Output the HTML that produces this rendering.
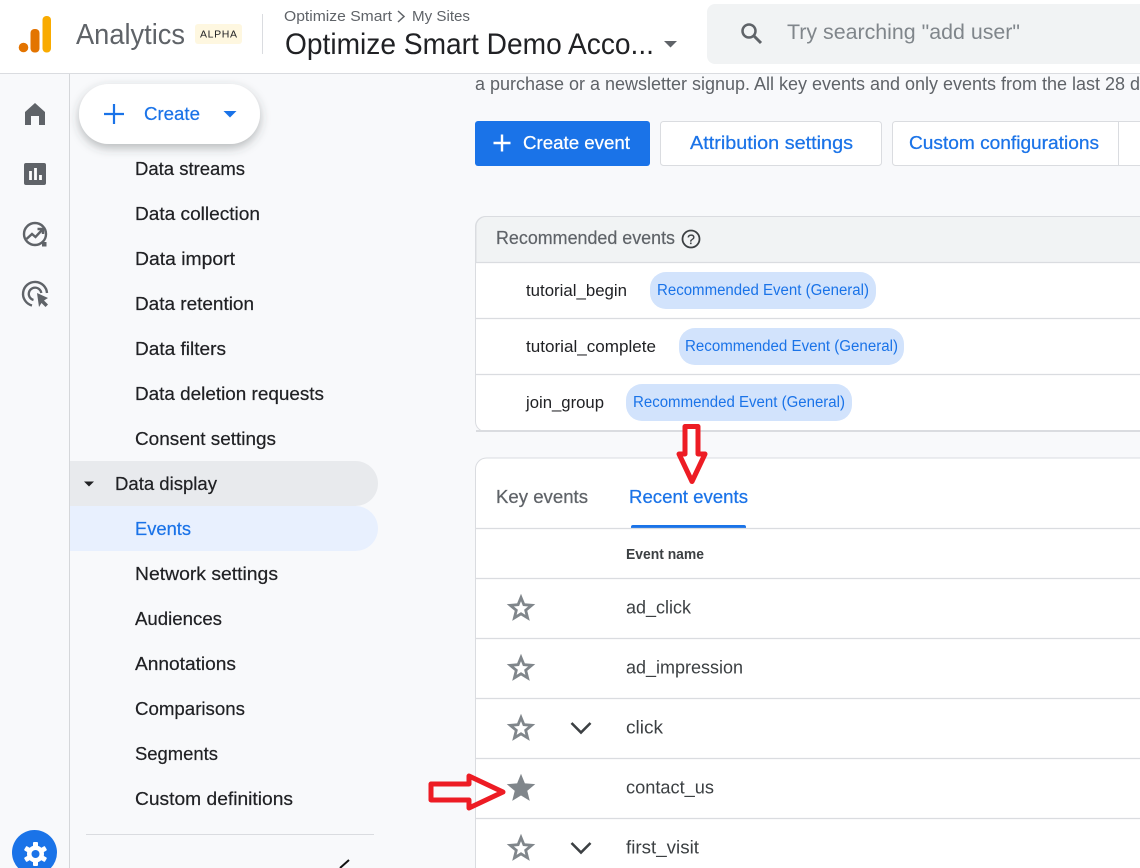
<!DOCTYPE html>
<html lang="en"><head><meta charset="utf-8"><title>Events - Analytics</title>
<style>
html,body{margin:0;padding:0;width:1140px;height:868px;overflow:hidden;background:#f8f9fb}
svg{display:block}
text{font-family:"Liberation Sans",sans-serif;font-size:18px;fill:#202124}
.nav{font-size:18px;fill:#202124;stroke:#202124;stroke-width:.2}
.ev{font-size:18px;fill:#3c4043}
.blue{fill:#1a73e8;stroke:#1a73e8;stroke-width:.25}
.chip{font-size:15.5px;fill:#1a73e8}
.rec{font-size:17px;fill:#202124}
.star{fill:none;stroke:#80868b;stroke-width:2.8;stroke-linejoin:miter}
.chev{fill:none;stroke:#3c4043;stroke-width:2.6}
.line{stroke:#dadce0;stroke-width:1.3}
.arrow{fill:none;stroke:#ed1c24;stroke-width:5;stroke-linejoin:round}
</style></head><body>
<svg width="1140" height="868" viewBox="0 0 1140 868" xmlns="http://www.w3.org/2000/svg">
<defs>
<filter id="sh" x="-20%" y="-40%" width="140%" height="190%"><feDropShadow dx="0" dy="4" stdDeviation="5" flood-color="#3c4043" flood-opacity=".35"/></filter>
</defs>
<rect width="1140" height="868" fill="#f8f9fb"/>

<!-- main cards -->
<text x="475" y="90" textLength="665" lengthAdjust="spacingAndGlyphs" style="font-size:18.5px;fill:#5f6368">a purchase or a newsletter signup. All key events and only events from the last 28 d</text>

<rect x="475" y="121" width="175" height="45" rx="3" fill="#1a73e8"/>
<path d="M502 134.500v17M493.500 143h17" stroke="#fff" stroke-width="2.400"/>
<text x="523" y="149" textLength="107" lengthAdjust="spacingAndGlyphs" style="font-size:18.500px;fill:#fff;stroke:#fff;stroke-width:.25">Create event</text>

<rect x="660.500" y="121.500" width="221" height="44" rx="3" fill="#fff" stroke="#dadce0"/>
<text x="690" y="149" textLength="163" lengthAdjust="spacingAndGlyphs" class="blue" style="font-size:18.500px">Attribution settings</text>
<rect x="892.500" y="121.500" width="270" height="44" rx="3" fill="#fff" stroke="#dadce0"/>
<line x1="1118.500" y1="122" x2="1118.500" y2="165" stroke="#dadce0"/>
<text x="909" y="149" textLength="190" lengthAdjust="spacingAndGlyphs" class="blue" style="font-size:18.500px">Custom configurations</text>

<!-- Recommended card -->
<rect x="475.500" y="216.500" width="700" height="215" rx="10" fill="#fff" stroke="#dadce0"/>
<path d="M476 262V226.500a10 10 0 0 1 10-10H1140V262Z" fill="#f1f3f4"/>
<path d="M476 262V226.500a10 10 0 0 1 10-10H1140" fill="none" stroke="#dadce0"/>
<text x="496" y="244" textLength="179" lengthAdjust="spacingAndGlyphs" style="font-size:18.500px;fill:#5f6368;stroke:#5f6368;stroke-width:.2">Recommended events</text>
<circle cx="691" cy="239" r="8.500" fill="none" stroke="#3c4043" stroke-width="1.800"/>
<text x="691" y="244" text-anchor="middle" style="font-size:14px;fill:#3c4043;stroke:#3c4043;stroke-width:.3">?</text>
<line class="line" x1="476" y1="262.500" x2="1140" y2="262.500"/>
<line class="line" x1="476" y1="318.500" x2="1140" y2="318.500"/>
<line class="line" x1="476" y1="374.500" x2="1140" y2="374.500"/>
<line x1="476" y1="431" x2="1140" y2="431" stroke="#dadce0" stroke-width="2"/>

<text class="rec" x="526" y="296" textLength="101" lengthAdjust="spacingAndGlyphs">tutorial_begin</text>
<rect x="650" y="272" width="226" height="37" rx="16" fill="#d2e3fc"/>
<text class="chip" x="657" y="295" textLength="212" lengthAdjust="spacingAndGlyphs">Recommended Event (General)</text>
<text class="rec" x="526" y="352" textLength="130" lengthAdjust="spacingAndGlyphs">tutorial_complete</text>
<rect x="679" y="328" width="225" height="37" rx="16" fill="#d2e3fc"/>
<text class="chip" x="685" y="351" textLength="213" lengthAdjust="spacingAndGlyphs">Recommended Event (General)</text>
<text class="rec" x="526" y="408" textLength="78" lengthAdjust="spacingAndGlyphs">join_group</text>
<rect x="626" y="384" width="226" height="37" rx="16" fill="#d2e3fc"/>
<text class="chip" x="633" y="407" textLength="212" lengthAdjust="spacingAndGlyphs">Recommended Event (General)</text>

<!-- Events card -->
<path d="M475.500 880V469a11 11 0 0 1 11-11H1170V880Z" fill="#fff" stroke="#dadce0"/>
<text x="496" y="503" textLength="92" lengthAdjust="spacingAndGlyphs" style="font-size:18.500px;fill:#5f6368;stroke:#5f6368;stroke-width:.25">Key events</text>
<text x="629" y="503" textLength="119" lengthAdjust="spacingAndGlyphs" class="blue" style="font-size:18.500px">Recent events</text>
<path d="M631 528v-1a2 2 0 0 1 2-2H744a2 2 0 0 1 2 2v1Z" fill="#1a73e8"/>
<line class="line" x1="476" y1="528.500" x2="1140" y2="528.500"/>
<text x="626" y="559" textLength="78" lengthAdjust="spacingAndGlyphs" style="font-size:14.500px;font-weight:bold;fill:#3c4043">Event name</text>
<line class="line" x1="476" y1="578.500" x2="1140" y2="578.500"/>
<line class="line" x1="476" y1="638.500" x2="1140" y2="638.500"/>
<line class="line" x1="476" y1="698.500" x2="1140" y2="698.500"/>
<line class="line" x1="476" y1="758.500" x2="1140" y2="758.500"/>
<line class="line" x1="476" y1="818.500" x2="1140" y2="818.500"/>

<text class="ev" x="626" y="613.500" textLength="65" lengthAdjust="spacingAndGlyphs">ad_click</text>
<text class="ev" x="626" y="673.500" textLength="117" lengthAdjust="spacingAndGlyphs">ad_impression</text>
<text class="ev" x="626" y="733.500" textLength="37" lengthAdjust="spacingAndGlyphs">click</text>
<text class="ev" x="626" y="793.500" textLength="88" lengthAdjust="spacingAndGlyphs">contact_us</text>
<text class="ev" x="626" y="853.500" textLength="73" lengthAdjust="spacingAndGlyphs">first_visit</text>

<path class="star" d="M521 597.500l2.900 7.200 7.800.6-6 5 1.900 7.600-6.600-4.100-6.600 4.100 1.900-7.600-6-5 7.800-.6Z"/>
<path class="star" d="M521 657.500l2.900 7.200 7.800.6-6 5 1.900 7.600-6.600-4.100-6.600 4.100 1.900-7.600-6-5 7.800-.6Z"/>
<path class="star" d="M521 717.500l2.900 7.200 7.800.6-6 5 1.900 7.600-6.600-4.100-6.600 4.100 1.900-7.600-6-5 7.800-.6Z"/>
<path class="star" style="fill:#80868b" d="M521 777.500l2.900 7.200 7.800.6-6 5 1.900 7.600-6.600-4.100-6.600 4.100 1.900-7.600-6-5 7.800-.6Z"/>
<path class="star" d="M521 837.500l2.900 7.200 7.800.6-6 5 1.900 7.600-6.600-4.100-6.600 4.100 1.900-7.600-6-5 7.800-.6Z"/>
<path class="chev" d="M571.500 723l9.500 9.500 9.500-9.500"/>
<path class="chev" d="M571.500 843l9.500 9.500 9.500-9.500"/>

<!-- Arrows -->
<path class="arrow" style="fill:#fff" d="M685 426.500H698V454H705L692 481.500 679 454H685Z"/>
<path class="arrow" d="M431 784H469V776L503 792 469 808V800H431Z"/>

<!-- Header -->
<rect width="1140" height="73" fill="#fff"/>
<line x1="0" y1="73.500" x2="1140" y2="73.500" stroke="#dadce0"/>
<circle cx="23.500" cy="47.500" r="4.800" fill="#e37400"/>
<rect x="30.500" y="29" width="9" height="23.500" rx="4" fill="#e37400"/>
<rect x="42.500" y="16" width="8.500" height="36.500" rx="4" fill="#f9ab00"/>
<text x="76" y="44" textLength="109" lengthAdjust="spacingAndGlyphs" style="font-size:29px;fill:#5f6368">Analytics</text>
<rect x="195" y="24" width="47" height="20" rx="3" fill="#fef7e0"/>
<text x="200" y="37.500" textLength="37" lengthAdjust="spacing" style="font-size:10.500px;fill:#202124">ALPHA</text>
<line x1="262.500" y1="14" x2="262.500" y2="54" stroke="#dadce0"/>
<text x="284" y="21" textLength="108" lengthAdjust="spacingAndGlyphs" style="font-size:15px;fill:#5f6368">Optimize Smart</text>
<path d="M398 11l6 5.500-6 5.500" fill="none" stroke="#5f6368" stroke-width="1.500"/>
<text x="412" y="21" textLength="58" lengthAdjust="spacingAndGlyphs" style="font-size:15px;fill:#5f6368">My Sites</text>
<text x="285" y="54" textLength="369" lengthAdjust="spacingAndGlyphs" style="font-size:29.500px;fill:#202124">Optimize Smart Demo Acco...</text>
<path d="M664 41h13l-6.500 6.500Z" fill="#5f6368"/>
<rect x="707" y="4" width="460" height="60" rx="8" fill="#f1f3f4"/>
<circle cx="749" cy="31" r="6.500" fill="none" stroke="#5f6368" stroke-width="2.500"/>
<path d="M753.500 35.500l7.500 7.500" stroke="#5f6368" stroke-width="3"/>
<text x="787" y="39" textLength="233" lengthAdjust="spacingAndGlyphs" style="font-size:21.500px;fill:#80868b">Try searching "add user"</text>

<!-- Left rail -->
<line x1="69.500" y1="74" x2="69.500" y2="868" stroke="#d5d7da"/>
<path d="M35 103L45 112V125H39V116H31V125H25V112Z" fill="#5f6368"/>
<rect x="24" y="163" width="22" height="22" rx="2" fill="#5f6368"/>
<path d="M30.500 180v-9M35.500 180v-12M40.500 180v-5" stroke="#fff" stroke-width="2.800" fill="none"/>
<circle cx="35" cy="234" r="11" fill="none" stroke="#5f6368" stroke-width="2.400"/>
<path d="M42 242h4.500v4.500H42Z" fill="#5f6368"/>
<path d="M26.500 239l5.500-5 3.500 3 6.500-7M37.500 229h5.500v5" fill="none" stroke="#5f6368" stroke-width="2.400"/>
<path d="M32 305.500A12 12 0 1 1 47 293" fill="none" stroke="#5f6368" stroke-width="2.400"/>
<path d="M33.500 300A6.300 6.300 0 1 1 41.300 293" fill="none" stroke="#5f6368" stroke-width="2.300"/>
<path d="M37 293L48 298 44 300.500 48 304.500 45.500 307 41.500 303 39 307Z" fill="#5f6368"/>
<circle cx="34.500" cy="852.500" r="22.500" fill="#1a73e8"/>
<g transform="translate(35.500 854)" fill="#fff">
<circle r="8.500"/>
<rect x="-2.500" y="-12" width="5" height="24" rx="1"/><rect x="-2.500" y="-12" width="5" height="24" rx="1" transform="rotate(60)"/><rect x="-2.500" y="-12" width="5" height="24" rx="1" transform="rotate(120)"/>
<circle r="4" fill="#1a73e8"/>
</g>

<!-- Side nav -->
<path d="M355.500 461a22.500 22.500 0 0 1 0 45H70V461Z" fill="#e8eaed"/>
<path d="M70 506H355.500a22.500 22.500 0 0 1 0 45H70Z" fill="#e8f0fe"/>
<path d="M84 481.500h10l-5 5Z" fill="#202124"/>

<text class="nav" x="135" y="175" textLength="110" lengthAdjust="spacingAndGlyphs">Data streams</text>
<text class="nav" x="135" y="220" textLength="125" lengthAdjust="spacingAndGlyphs">Data collection</text>
<text class="nav" x="135" y="265" textLength="100" lengthAdjust="spacingAndGlyphs">Data import</text>
<text class="nav" x="135" y="310" textLength="119" lengthAdjust="spacingAndGlyphs">Data retention</text>
<text class="nav" x="135" y="355" textLength="91" lengthAdjust="spacingAndGlyphs">Data filters</text>
<text class="nav" x="135" y="400" textLength="189" lengthAdjust="spacingAndGlyphs">Data deletion requests</text>
<text class="nav" x="135" y="445" textLength="141" lengthAdjust="spacingAndGlyphs">Consent settings</text>
<text class="nav" x="115" y="490" textLength="102" lengthAdjust="spacingAndGlyphs">Data display</text>
<text x="135" y="535" textLength="56" lengthAdjust="spacingAndGlyphs" style="font-size:18px;fill:#1a73e8;stroke:#1a73e8;stroke-width:.2">Events</text>
<text class="nav" x="135" y="580" textLength="143" lengthAdjust="spacingAndGlyphs">Network settings</text>
<text class="nav" x="135" y="625" textLength="87" lengthAdjust="spacingAndGlyphs">Audiences</text>
<text class="nav" x="135" y="670" textLength="101" lengthAdjust="spacingAndGlyphs">Annotations</text>
<text class="nav" x="135" y="715" textLength="110" lengthAdjust="spacingAndGlyphs">Comparisons</text>
<text class="nav" x="135" y="760" textLength="83" lengthAdjust="spacingAndGlyphs">Segments</text>
<text class="nav" x="135" y="805" textLength="158" lengthAdjust="spacingAndGlyphs">Custom definitions</text>
<line x1="86" y1="834.500" x2="374" y2="834.500" stroke="#dadce0"/>
<path d="M340 868l9-8" stroke="#111" stroke-width="2"/>

<!-- Create button -->
<rect x="79" y="84" width="181" height="60" rx="30" fill="#fff" filter="url(#sh)"/>
<path d="M114 104v20M104 114h20" stroke="#1a73e8" stroke-width="2.200"/>
<text x="144" y="120" textLength="56" lengthAdjust="spacingAndGlyphs" style="font-size:18.500px;fill:#1a73e8;stroke:#1a73e8;stroke-width:.2">Create</text>
<path d="M223.500 111h13l-6.500 6.500Z" fill="#1a73e8"/>
</svg>
</body></html>
